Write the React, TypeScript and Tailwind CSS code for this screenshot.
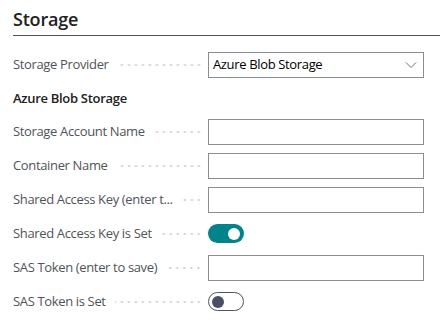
import React from 'react';

const Dots = () => (
    <div className="flex-1 h-[4px] ml-[9px] mr-[6px] bg-[radial-gradient(circle,#ccced3_0.9px,transparent_1.3px)] bg-size-[7px_4px] bg-right bg-repeat-x" />
);

const Row = ({ label, children }: { label: string; children: React.ReactNode }) => (
    <div className="flex items-center h-[34px]">
        <div className="w-[195px] flex items-center min-w-0 text-[13px] tracking-[-0.35px] text-[#505359]">
            <span className="whitespace-nowrap">{label}</span>
            <Dots />
        </div>
        {children}
    </div>
);

const TextBox = () => <div className="w-[216px] h-[26px] border border-[#8a8d99] bg-white" />;

const Toggle = ({ on }: { on: boolean }) =>
    on ? (
        <div className="w-[36px] h-[19px] rounded-full bg-[#00848a] flex items-center justify-end px-[4px]">
            <div className="w-[12px] h-[12px] rounded-full bg-white" />
        </div>
    ) : (
        <div className="w-[36px] h-[19px] rounded-full border border-[#505360] flex items-center px-[3px]">
            <div className="w-[12px] h-[12px] rounded-full bg-[#4a5064]" />
        </div>
    );

export default function App() {
    return (
        <div className="w-[440px] h-[322px] bg-white pl-[13px] font-['Open_Sans',sans-serif] text-[#212121]">
            {/* header */}
            <div className="pt-[9px] pb-[6px] border-b border-[#50545f]">
                <h2 className="text-[18px] font-semibold leading-[20px] tracking-[-0.2px]">Storage</h2>
            </div>

            <div className="pt-[12px]">
                <Row label="Storage Provider">
                    <div className="w-[216px] h-[26px] border border-[#8a8d99] flex items-center justify-between pl-[4px] pr-[6px] text-[13px] tracking-[-0.35px] text-black">
                        <span>Azure Blob Storage</span>
                        <svg width="12" height="8" viewBox="0 0 12 8" fill="none">
                            <path d="M1 1.5 L6 6.5 L11 1.5" stroke="#6b6f7a" strokeWidth="1" />
                        </svg>
                    </div>
                </Row>

                <div className="text-[13px] font-semibold tracking-[-0.3px] text-[#212121] pt-[7px] pb-[6px]">Azure Blob Storage</div>

                <Row label="Storage Account Name"><TextBox /></Row>
                <Row label="Container Name"><TextBox /></Row>
                <Row label="Shared Access Key (enter t..."><TextBox /></Row>
                <Row label="Shared Access Key is Set"><Toggle on /></Row>
                <Row label="SAS Token (enter to save)"><TextBox /></Row>
                <Row label="SAS Token is Set"><Toggle on={false} /></Row>
            </div>
        </div>
    );
}
